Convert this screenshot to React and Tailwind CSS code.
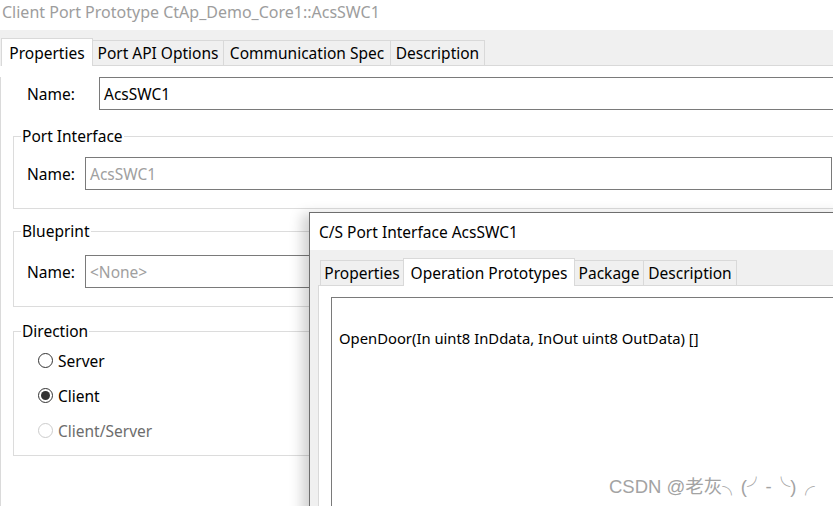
function Tab({ label, selected, w, first }) {
  if (selected) {
    return (
      <div className={`relative z-10 -ml-[1px] h-[28px] ${w} shrink-0 bg-white border-t border-l border-r border-[#d9d9d9] flex items-center justify-center leading-[20px]`}>
        {label}
      </div>
    );
  }
  return (
    <div className={`h-[26px] ${w} shrink-0 bg-[#f0f0f0] border-t border-r border-b ${first ? "border-l" : ""} border-[#d9d9d9] flex items-center justify-center leading-[20px]`}>
      {label}
    </div>
  );
}

function TabStrip({ children, lead }) {
  return (
    <div className="flex items-end h-[36px] bg-[#f0f0f0]">
      {lead}
      {children}
      <div className="flex-1 border-b border-[#d9d9d9]" />
    </div>
  );
}

function Radio({ checked, disabled, label }) {
  return (
    <div className="flex items-center h-[35px] pl-[17px]">
      <div
        className={`w-[15px] h-[15px] rounded-full border flex items-center justify-center bg-white ${
          disabled ? "border-[#cccccc]" : "border-[#333333]"
        }`}
      >
        {checked && <div className="w-[9px] h-[9px] rounded-full bg-[#333333]" />}
      </div>
      <span className={`ml-[5px] leading-[20px] ${disabled ? "text-[#6d6d6d]" : "text-black"}`}>{label}</span>
    </div>
  );
}

export default function App() {
  return (
    <div className="relative w-[833px] h-[506px] overflow-hidden bg-white text-black font-['Noto_Sans',sans-serif] text-[15.5px]">
      {/* Window title */}
      <div className="h-[30px] pl-[2px] leading-[24px] text-[16px] text-[#9d9d9d] whitespace-nowrap">
        Client Port Prototype CtAp_Demo_Core1::AcsSWC1
      </div>

      {/* Main tabs */}
      <TabStrip>
        <Tab label="Properties" selected w="w-[92px] ml-[1px]" />
        <Tab label="Port API Options" w="w-[131px]" />
        <Tab label="Communication Spec" w="w-[167px]" />
        <Tab label="Description" w="w-[94px]" />
      </TabStrip>

      {/* Main pane */}
      <div className="border-l border-[#dadada] h-[450px] w-[900px]">
        <div className="flex items-center mt-[11px] pl-[26px] h-[33px] whitespace-nowrap">
          <span className="w-[72px] leading-[20px]">Name:</span>
          <div className="h-[33px] w-[760px] border border-[#7a7a7a] flex items-center pl-[4px] leading-[20px]">
            AcsSWC1
          </div>
        </div>

        <fieldset className="ml-[12px] mt-[16px] w-[840px] border border-[#dcdcdc] pl-[7px] pb-[18px]">
          <legend className="px-[1px] leading-[20px]">Port Interface</legend>
          <div className="flex items-center mt-[11px] pl-[6px]">
            <span className="w-[58px] leading-[20px]">Name:</span>
            <div className="h-[33px] w-[747px] border border-[#7a7a7a] flex items-center pl-[4px] leading-[20px] text-[#a0a0a0]">
              AcsSWC1
            </div>
          </div>
        </fieldset>

        <fieldset className="ml-[12px] mt-[12px] w-[840px] border border-[#dcdcdc] pl-[7px] pb-[18px]">
          <legend className="px-[1px] leading-[20px]">Blueprint</legend>
          <div className="flex items-center mt-[14px] pl-[6px]">
            <span className="w-[58px] leading-[20px]">Name:</span>
            <div className="h-[33px] w-[747px] border border-[#7a7a7a] flex items-center pl-[4px] leading-[20px] text-[#a0a0a0]">
              &lt;None&gt;
            </div>
          </div>
        </fieldset>

        <fieldset className="ml-[12px] mt-[14px] w-[840px] border border-[#dcdcdc] pl-[7px] pb-[7px]">
          <legend className="px-[1px] leading-[20px]">Direction</legend>
          <div className="mt-[2px]">
            <Radio label="Server" />
            <Radio label="Client" checked />
            <Radio label="Client/Server" disabled />
          </div>
        </fieldset>
      </div>

      {/* Overlapping dialog */}
      <div className="absolute left-[309px] top-[212px] w-[540px] h-[310px] border border-[#6e6e6e] bg-[#f0f0f0] shadow-[-7px_2px_12px_rgba(0,0,0,0.18)]">
        <div className="h-[37px] bg-white flex items-center pl-[9px] leading-[20px] whitespace-nowrap">
          C/S Port Interface AcsSWC1
        </div>
        <div className="pl-[8px]">
          <TabStrip lead={<div className="w-[2px] border-b border-[#d9d9d9]" />}>
            <Tab label="Properties" first w="w-[84px]" />
            <Tab label="Operation Prototypes" selected w="w-[172px]" />
            <Tab label="Package" w="w-[69px]" />
            <Tab label="Description" w="w-[93px]" />
          </TabStrip>
          <div className="border-l border-[#d9d9d9] bg-white h-[300px] pl-[12px] pt-[11px]">
            <div className="border border-[#7a7a7a] h-[300px] pl-[7px] pt-[30px] leading-[20px] text-[14.8px] whitespace-nowrap">
              OpenDoor(In uint8 InDdata, InOut uint8 OutData) []
            </div>
          </div>
        </div>
      </div>

      {/* Watermark */}
      <div className="absolute left-[609px] top-[475px] text-[18.5px] leading-[24px] text-[#a3a3a3] whitespace-nowrap font-['Liberation_Sans','Noto_Sans_CJK_SC',sans-serif]">
        CSDN @老灰╮(╯-╰)╭
      </div>
    </div>
  );
}
